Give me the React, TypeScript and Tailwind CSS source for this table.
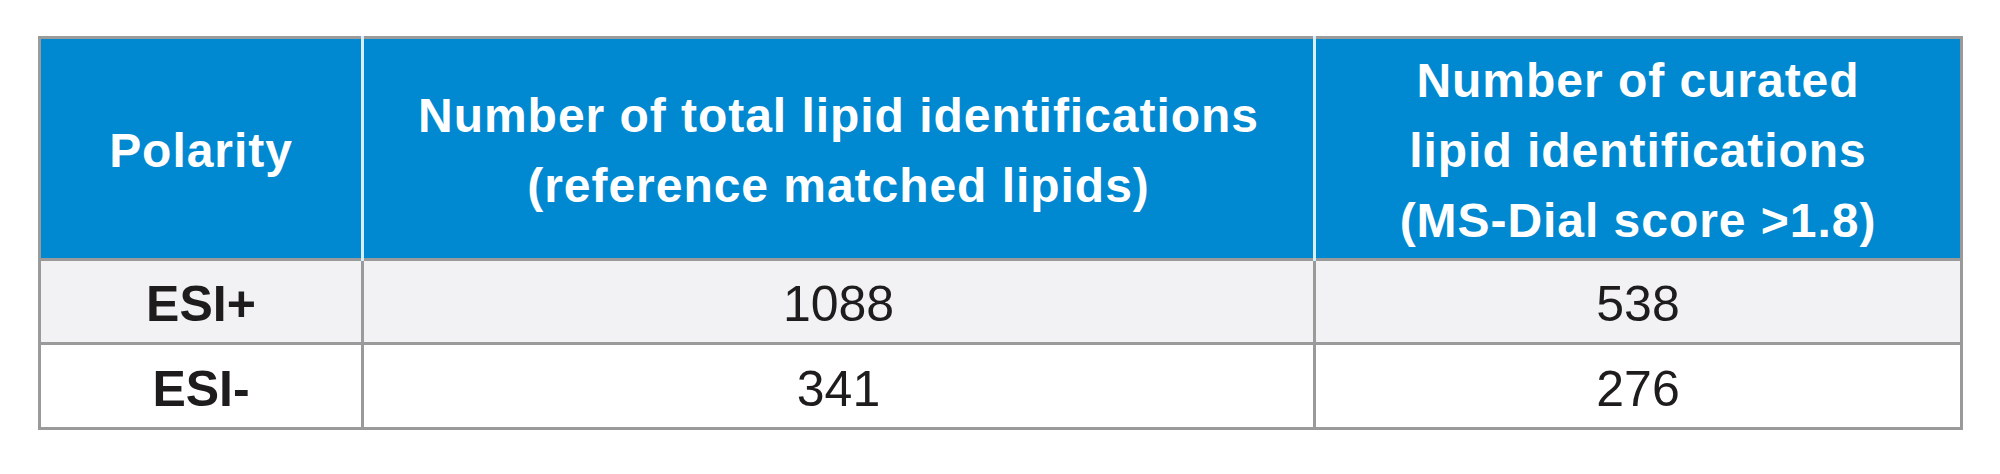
export default function App() {
  return (
    <div className="w-[2000px] h-[474px] bg-white pt-[36px] pl-[38px] font-['Liberation_Sans',Arial,sans-serif]">
      <table className="border-collapse border-[3px] border-[#9a9a9a] text-center">
        <thead>
          <tr className="h-[222px] bg-[#0089d0] text-white text-[48px] leading-[70px] tracking-[0.02em]">
            <th className="w-[323px] border-r-[3px] border-[#d8eefa] font-bold pt-[5px]">Polarity</th>
            <th className="w-[952px] border-r-[3px] border-[#d8eefa] font-bold pt-[5px]">
              Number of total lipid identifications
              <br />
              (reference matched lipids)
            </th>
            <th className="w-[647px] font-bold pt-[4px]">
              Number of curated
              <br />
              lipid identifications
              <br />
              (MS-Dial score &gt;1.8)
            </th>
          </tr>
        </thead>
        <tbody className="text-[50px] text-[#1e1c1d]">
          <tr className="h-[84px] bg-[#f2f2f4] border-t-[3px] border-[#9a9a9a]">
            <td className="border-r-[3px] border-[#9a9a9a] font-bold pt-[6px]">ESI+</td>
            <td className="border-r-[3px] border-[#9a9a9a] pt-[6px]">1088</td>
            <td className="pt-[6px]">538</td>
          </tr>
          <tr className="h-[85px] bg-white border-t-[3px] border-[#9a9a9a]">
            <td className="border-r-[3px] border-[#9a9a9a] font-bold pt-[6px]">ESI-</td>
            <td className="border-r-[3px] border-[#9a9a9a] pt-[6px]">341</td>
            <td className="pt-[6px]">276</td>
          </tr>
        </tbody>
      </table>
    </div>
  )
}
